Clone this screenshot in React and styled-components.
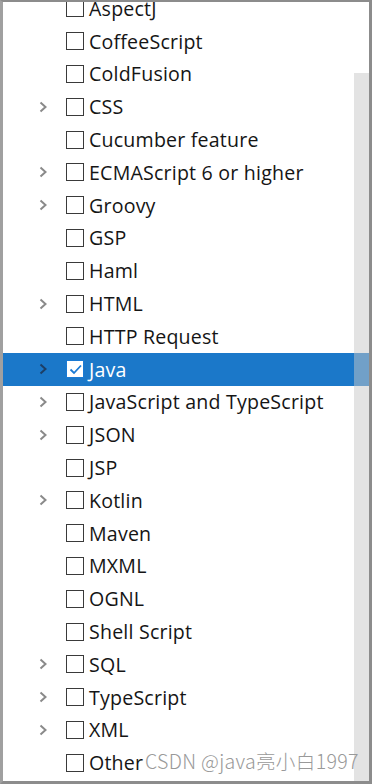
import React from 'react';
import styled, {createGlobalStyle} from "styled-components";

const Global = createGlobalStyle`
    html, body {
        margin: 0;
        padding: 0;
        background: #fff;
    }
    #root {
        width: 372px;
        height: 784px;
    }
`;

const items = [
    {name: 'AspectJ'},
    {name: 'CoffeeScript'},
    {name: 'ColdFusion'},
    {name: 'CSS', arrow: true},
    {name: 'Cucumber feature'},
    {name: 'ECMAScript 6 or higher', arrow: true},
    {name: 'Groovy', arrow: true},
    {name: 'GSP'},
    {name: 'Haml'},
    {name: 'HTML', arrow: true},
    {name: 'HTTP Request'},
    {name: 'Java', arrow: true, checked: true, selected: true},
    {name: 'JavaScript and TypeScript', arrow: true},
    {name: 'JSON', arrow: true},
    {name: 'JSP'},
    {name: 'Kotlin', arrow: true},
    {name: 'Maven'},
    {name: 'MXML'},
    {name: 'OGNL'},
    {name: 'Shell Script'},
    {name: 'SQL', arrow: true},
    {name: 'TypeScript', arrow: true},
    {name: 'XML', arrow: true},
    {name: 'Other'},
];

const Chevron = ({selected}) => (
    <svg width="10" height="12" viewBox="0 0 10 12">
        <path d="M2.5 1.5 L7.5 6 L2.5 10.5" fill="none"
              stroke={selected ? '#1d3f66' : '#8a8a8a'} strokeWidth="2"/>
    </svg>
);

const Check = () => (
    <svg width="15" height="15" viewBox="0 0 15 15">
        <path d="M2.5 7.5 L6 11 L13 3.5" fill="none" stroke="#1a7ad4" strokeWidth="1.8"/>
    </svg>
);

const App = () => {
    return (
        <Frame>
            <Global/>
            <List>
                {items.map((item) => (
                    <Row key={item.name} $selected={item.selected}>
                        <Arrow>{item.arrow && <Chevron selected={item.selected}/>}</Arrow>
                        <Box $checked={item.checked}>{item.checked && <Check/>}</Box>
                        <Label $selected={item.selected}>{item.name}</Label>
                    </Row>
                ))}
            </List>
            <Thumb/>
            <Watermark>CSDN @java亮小白1997</Watermark>
        </Frame>
    );
}
export default App;

const Frame = styled.div`
    position: relative;
    box-sizing: border-box;
    width: 372px;
    height: 784px;
    overflow: hidden;
    background: #fff;
    border: 3px solid #8c8c8c;
    border-top-width: 2px;
    border-left-color: #a0a0a0;
    font-family: "Open Sans", "Noto Sans", sans-serif;
`;

const List = styled.div`
    margin-top: -10px;
    position: relative;
    z-index: 0;
`;

const Row = styled.div`
    display: flex;
    align-items: center;
    height: 32.8px;
    background: ${p => p.$selected ? '#1b78c9' : 'transparent'};
`;

const Arrow = styled.div`
    padding-left: 35px;
    box-sizing: border-box;
    width: 63px;
    display: flex;
    align-items: center;
`;

const Box = styled.div`
    box-sizing: border-box;
    width: 18px;
    height: 18px;
    border: 1.5px solid ${p => p.$checked ? '#1a7ad4' : '#3a3a3a'};
    background: #fff;
    display: flex;
    align-items: center;
    justify-content: center;
`;

const Label = styled.span`
    margin-left: 5px;
    font-size: 19.6px;
    font-weight: 500;
    color: ${p => p.$selected ? '#fff' : '#151515'};
    white-space: nowrap;
    letter-spacing: 0.2px;
`;

const Thumb = styled.div`
    position: absolute;
    right: 0;
    top: 71px;
    bottom: 0;
    width: 15px;
    background: rgba(200, 200, 200, 0.5);
    z-index: 1;
`;

const Watermark = styled.div`
    position: absolute;
    left: 142px;
    bottom: 6px;
    font-family: "Noto Sans CJK SC", "Noto Sans", sans-serif;
    font-size: 19.6px;
    font-weight: 300;
    letter-spacing: 0.3px;
    color: #999;
    z-index: 2;
    white-space: nowrap;
`;
